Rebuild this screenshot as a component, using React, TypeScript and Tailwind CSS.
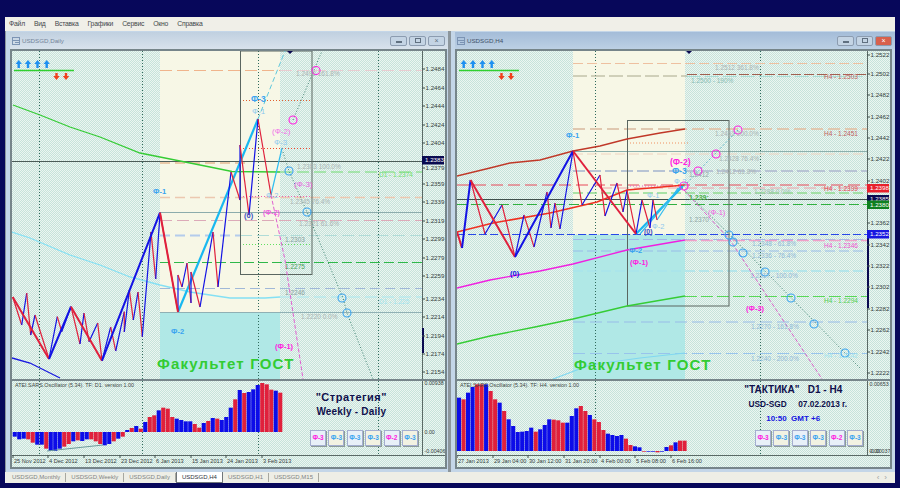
import React from 'react';

type P = [number, number];
type HLine = [number, number, number, string, number, string?];
type Label = [number, number, string, string, number?, boolean?];
type Curve = [P[], string, number, string?];

const RED = '#e0203c';
const BLUE = '#1212e4';
const SKY = '#3aa4f0';
const PALE = '#8ec8ee';
const MAG = '#ff20e0';
const GRN = '#35cc35';
const GRY = '#aab4b4';

const pts = (p: P[]) => p.map((q) => q.join(',')).join(' ');

// segments going up are blue, going down red
const Zigzag = ({ points, width }: { points: P[]; width: number }) => (
  <>
    {points.slice(1).map((p, i) => (
      <line
        key={i}
        x1={points[i][0]}
        y1={points[i][1]}
        x2={p[0]}
        y2={p[1]}
        stroke={p[1] < points[i][1] ? BLUE : RED}
        strokeWidth={width}
      />
    ))}
  </>
);

const daily = {
  title: 'USDSGD,Daily',
  active: false,
  x0: 12,
  bands: [
    [160, 51, 120, 261, '#f7f7e6'],
    [160, 312, 120, 67, '#b0e8e6'],
  ] as [number, number, number, number, string][],
  box: [240.5, 51, 71.5, 223.5],
  vlines: [39.5, 142.5, 258.5, 378.5],
  hlines: [
    [160, 280, 70.5, '#f0b48c', 1, '12 5'],
    [280, 422, 70.5, '#e8ccd0', 1, '12 5'],
    [12, 422, 161.5, '#4c5c58', 1],
    [160, 245, 163, '#eac9a8', 2, '10 5'],
    [160, 422, 197.5, '#ecc8b0', 1.4, '10 5'],
    [160, 422, 212.5, '#8cacac', 1],
    [160, 422, 220.5, '#dcaab8', 1, '12 5'],
    [160, 240, 235.5, '#b4ccec', 2, '10 5'],
    [240, 422, 235.5, '#b0dcd8', 1, '12 5'],
    [160, 422, 262.5, '#2fb84a', 1, '10 4'],
    [160, 422, 288.5, '#a0b8d8', 1, '10 5'],
    [160, 422, 312.5, '#90b0b4', 1],
    [240, 312, 100.5, '#e06030', 1, '1 2'],
    [240, 312, 148.5, '#f04830', 1, '1 2'],
    [240, 312, 196.5, '#f060b0', 1, '1 2'],
    [240, 310, 244.5, '#60e060', 1, '1 2'],
    [280, 422, 172, '#70dc70', 1, '12 5'],
    [280, 422, 297, '#a8e8f0', 1, '12 5'],
  ] as HLine[],
  curves: [
    [[[13, 105], [40, 115], [70, 127], [100, 137], [140, 153], [175, 160], [210, 167], [232, 171.5], [280, 172]], GRN, 1.3],
    [[[12, 232], [30, 238], [70, 255], [100, 265], [130, 277], [160, 285], [190, 292], [230, 298], [265, 298], [280, 297]], '#84e0f4', 1.3],
    [[[12, 358], [30, 363], [60, 378]], '#1818e0', 1.3],
    [[[258, 119], [285, 51]], '#60c8dc', 1, '5 3'],
    [[[293, 120], [322, 51]], '#3c8070', 1, '1 2'],
    [[[283, 152], [289, 171], [307, 212], [343, 298], [347, 313], [373, 379]], '#3c8070', 1, '1 2'],
    [[[271, 195], [285, 260], [303, 379]], '#e060d0', 1, '4 2'],
    [[[178, 312], [258, 119]], '#18b8f0', 2.2],
    [[[271, 195], [282, 148]], '#30bcf0', 1.2],
  ] as Curve[],
  thick: [[12.7, 297], [49, 359], [71, 306.7], [102, 360.7], [160, 212.7], [178, 312]] as P[],
  thin: [
    [12.7, 297], [21.7, 325], [26.7, 293], [30.7, 335], [35, 315], [49, 359], [57.3, 316.7], [61.7, 331.7], [71, 306.7],
    [80, 344], [84, 313], [89, 341.7], [97.7, 323], [102, 360.7], [110.7, 327], [115.7, 351], [124.3, 311.7], [124.3, 332],
    [129.3, 290], [133.3, 320], [138, 292], [142.3, 336.7], [151, 232], [155.7, 279], [160, 212.7], [178, 312], [178, 275],
    [182, 287], [187, 263], [191, 303], [191, 272], [200, 307], [213, 232], [218, 287], [231, 172], [240, 200], [240, 145],
    [249, 215], [258, 119], [271, 195],
  ] as P[],
  rings: [[316, 70.5, MAG], [293, 120, MAG], [289, 171, SKY], [307, 212, SKY], [342, 298, SKY], [347, 313, SKY]] as [number, number, string][],
  labels: [
    [153, 194, 'Ф-1', SKY, 7.5, true],
    [171, 334, 'Ф-2', SKY, 7.5, true],
    [251, 102, 'Ф-3', SKY, 8.5, true],
    [252, 114, 'Ф-1', PALE, 8],
    [272, 134, '(Ф-2)', '#f070e8', 8],
    [274, 145, 'Ф-3', PALE, 8],
    [294, 187, '(Ф-3)', '#e860e0', 8],
    [266, 198, 'Ф-2', PALE, 7.5],
    [244, 218, '(0)', '#3c50c0', 7.5, true],
    [263, 215, '(Ф-2)', '#f060e0', 7, true],
    [275, 349, '(Ф-1)', MAG, 7.5, true],
    [296, 76, '1.2492  161.8%', GRY, 6.5],
    [297, 169, '1.2383  100.0%', GRY, 6.5],
    [290, 204, '1.2345  76.4%', GRY, 6.5],
    [299, 226, '1.2321  61.6%', GRY, 6.5],
    [285, 242, '1.2303', '#88a0a0', 6.5],
    [285, 269, '1.2275', '#48a058', 6.5],
    [285, 295, '1.2246', '#88a0a0', 6.5],
    [301, 319, '1.2220  0.0%', GRY, 6.5],
    [379, 177, 'D1 - 1.2374', '#70e070', 6.5],
    [379, 304, 'D1 - 1.225', '#a0e4f0', 6.5],
  ] as Label[],
  brand: [157, 369] as P,
  marker: 290,
  bar: [328, 353] as P,
  ticks: [[69, '1.2484'], [88, '1.2464'], [106, '1.2444'], [125, '1.2424'], [143, '1.2404'], [168, '1.2379'], [184, '1.2359'], [202, '1.2339'], [221, '1.2319'], [239, '1.2299'], [258, '1.2279'], [276, '1.2259'], [299, '1.2234'], [317, '1.2214'], [336, '1.2194'], [354, '1.2174'], [372, '1.2154']] as [number, string][],
  boxes: [[160, '1.2383', '#0a0a50']] as [number, string, string][],
  osc: {
    title: 'ATEI.SARS.Oscillator (5.34). TF: D1. version 1.00',
    zero: 432,
    top: '0.00938',
    topY: 383,
    mid: [432, '0.00'] as [number, string],
    low: [451, '-0.00406'] as [number, string],
    // bar heights read off a 3x crop
    values: [-14, -22, -20, -22, -32, -38, -38, -50, -57, -57, -50, -44, -36, -28, -25, -27, -22, -22, -28, -36, -40, -36, -28, -20, -14, 6, 12, 18, 10, 30, 45, 50, 65, 73, 70, 45, 40, 36, 32, 32, 24, 13, 27, 33, 42, 40, 36, 45, 73, 98, 126, 117, 120, 128, 141, 147, 143, 127, 124, 118],
    colors: 'bbbrrbbrbbbrrbrbbrrrbbrbrbrbrbrrbrrrbbbbrrbrbrbbbrbrbbbrrrbr',
    step: 4.5,
    start: 12.7,
  },
  axis: [[13, '25 Nov 2012'], [48, '4 Dec 2012'], [84, '13 Dec 2012'], [120, '23 Dec 2012'], [155, '6 Jan 2013'], [191, '15 Jan 2013'], [226, '24 Jan 2013'], [262, '3 Feb 2013']] as [number, string][],
};

const h4 = {
  title: 'USDSGD,H4',
  active: true,
  x0: 457,
  bands: [
    [573, 51, 112, 183, '#f7f7e6'],
    [573, 235, 112, 144, '#b0e8e6'],
  ] as [number, number, number, number, string][],
  box: [627.5, 120.5, 101.5, 185.5],
  vlines: [595.5, 760.5],
  hlines: [
    [573, 867, 63.5, '#eec0a0', 1, '10 4'],
    [573, 687, 76, '#a8a88c', 1, '14 4'],
    [687, 867, 74.5, '#a06050', 1, '10 3'],
    [687, 867, 76.5, '#a8dcd4', 1, '14 4'],
    [573, 867, 129, '#e0c8b0', 2, '12 5'],
    [627, 690, 143, '#f09060', 1, '1 2'],
    [573, 867, 151.5, '#8cb0ac', 1],
    [573, 867, 154, '#f0d4c0', 1, '10 4'],
    [573, 867, 171, '#b8c4d4', 2, '12 4'],
    [457, 867, 185, '#e84858', 1, '12 5'],
    [627, 690, 186, '#e060d0', 1, '1 2'],
    [600, 867, 188, '#f0a0a8', 1, '12 5'],
    [573, 867, 193, '#90dc90', 1.4, '10 4'],
    [457, 867, 199.5, '#40504c', 1],
    [457, 867, 204.5, '#30b040', 1, '10 4'],
    [457, 867, 234.5, '#2848e8', 1, '8 3'],
    [573, 867, 239.5, '#a0b8e8', 1, '10 4'],
    [685, 867, 240.5, '#f0a0c8', 1.4, '12 4'],
    [573, 867, 251, '#98bce8', 1, '10 4'],
    [573, 867, 271, '#a8e4ec', 1.4, '10 4'],
    [685, 867, 296.5, '#58d858', 1, '12 4'],
    [573, 867, 322, '#98bce8', 1, '12 5'],
    [573, 867, 353.5, '#98c4ec', 1, '12 5'],
  ] as HLine[],
  curves: [
    [[[457, 176], [490, 168], [510, 163], [540, 160], [573, 151], [600, 146], [627, 139], [660, 133], [685, 129]], '#c03828', 1.3],
    [[[457, 232], [493, 223], [550, 213], [597, 202], [627, 190], [685, 185]], '#f03020', 1.5],
    [[[457, 288], [490, 280], [540, 271], [573, 264], [627, 250], [685, 240]], '#f020e0', 1.3],
    [[[457, 344], [490, 336], [535, 327], [573, 319], [627, 306], [685, 296]], GRN, 1.3],
    [[[553, 379], [590, 365], [640, 358], [685, 353]], '#80d8f0', 1.2],
    [[[684, 186], [738, 130]], '#58b4c8', 1, '2 2'],
    [[[680, 186], [730, 235], [845, 353], [860, 368]], '#3c8070', 1, '1 2'],
    [[[684, 190], [730, 240], [822, 379]], '#d860c8', 1, '4 2'],
    [[[636, 234], [683, 186]], '#18b8f0', 2.2],
    [[[657, 220], [678, 188]], '#30bcf0', 1.2],
    [[[640, 234], [681, 186]], '#30bcf0', 1.2],
  ] as Curve[],
  thick: [[457, 232], [462, 248], [470.5, 180], [515, 257], [573, 151], [636, 234]] as P[],
  thin: [
    [470.5, 180], [485, 234], [502, 205], [515, 257], [524, 215], [534, 247], [547, 192], [551, 228], [555, 203], [560, 229],
    [573, 151], [582, 205], [600, 175], [605, 216], [617, 183], [623, 212], [627, 190], [636, 234], [642, 200], [650, 228],
    [653, 200], [657, 220],
  ] as P[],
  rings: [[738, 130, MAG], [716, 154, MAG], [698, 171, MAG], [684, 186, MAG], [729, 235, SKY], [733, 242, SKY], [743, 253, SKY], [765, 272, SKY], [791, 298, SKY], [814, 324, SKY], [845, 353, SKY]] as [number, number, string][],
  labels: [
    [566, 138, 'Ф-1', SKY, 7.5, true],
    [629, 253, 'Ф-2', SKY, 7.5, true],
    [630, 265, '(Ф-1)', MAG, 7.5, true],
    [510, 276, '(0)', BLUE, 7.5, true],
    [644, 234, '(0)', '#3c50c0', 7, true],
    [652, 229, 'Ф-2', PALE, 7.5],
    [670, 165, '(Ф-2)', MAG, 8.5, true],
    [672, 174, 'Ф-3', SKY, 8.5, true],
    [674, 184, 'Ф-2', PALE, 7.5],
    [647, 198, 'Ф-1', PALE, 7.5],
    [689, 200, '1.239:', '#48b048', 7, true],
    [708, 215, '(Ф-1)', '#f060e0', 7.5],
    [746, 311, '(Ф-3)', MAG, 7.5, true],
    [715, 70, '1.2512  361.8%', GRY, 6.5],
    [691, 83, '1.2500 - 190%', '#88bcb4', 6.5],
    [715, 136, '1.2451  200.0%', GRY, 6.5],
    [719, 161, '1.2428  76.4%', GRY, 6.5],
    [716, 174, '1.2412  61.8%', GRY, 6.5],
    [689, 177, '1.2412', '#90a8a8', 6.5],
    [754, 194, '1.2388  0.0%', '#a0c0b0', 6.5],
    [689, 222, '1.2370', '#90a8a8', 6.5],
    [752, 246, '1.2348 - 61.8%', '#90b8d8', 6.5],
    [752, 258, '1.2336 - 76.4%', '#90b8d8', 6.5],
    [750, 278, '1.2317 - 100.0%', '#90b8d8', 6.5],
    [751, 329, '1.2270 - 161.8%', '#90b8d8', 6.5],
    [751, 361, '1.2240 - 200.0%', '#90b8d8', 6.5],
    [824, 79, 'H4 - 1.2503', '#c06060', 6.5],
    [824, 136, 'H4 - 1.2451', '#c06060', 6.5],
    [824, 191, 'H4 - 1.2399', '#e04050', 6.5],
    [824, 248, 'H4 - 1.2346', '#f050d0', 6.5],
    [824, 303, 'H4 - 1.2294', '#50d050', 6.5],
    [824, 358, 'H4 - 1.2242', '#a0e4f0', 6.5],
  ] as Label[],
  brand: [574, 370] as P,
  marker: 689,
  bar: [234, 308] as P,
  ticks: [[55, '1.2522'], [74, '1.2502'], [95, '1.2482'], [117, '1.2462'], [138, '1.2442'], [159, '1.2422'], [181, '1.2402'], [223, '1.2362'], [245, '1.2342'], [266, '1.2322'], [287, '1.2302'], [309, '1.2282'], [330, '1.2262'], [352, '1.2242'], [373, '1.2222']] as [number, string][],
  boxes: [[188, '1.2398', '#e8202c'], [199, '1.2385', '#0a0a50'], [204.5, '1.2380', '#108020'], [234, '1.2352', '#1818e0']] as [number, string, string][],
  osc: {
    title: 'ATEI.SARS.Oscillator (5.34). TF: H4. version 1.00',
    zero: 451,
    top: '0.00653',
    topY: 384,
    mid: [451, '0.00'] as [number, string],
    low: [451, '-0.00037'] as [number, string],
    values: [160, 155, 175, 192, 200, 200, 200, 180, 155, 145, 120, 95, 75, 57, 58, 60, 70, 58, 65, 78, 95, 94, 92, 85, 85, 105, 128, 135, 120, 108, 95, 87, 63, 52, 48, 45, 48, 37, 18, 14, 11, -2, -2, -2, -4, -2, 12, 17, 26, 31, 31],
    colors: 'brbbrrbrrbrbbbbbbrbbbrrrbbbrrbrrrbbbbrrbbrbbrbbrbrr',
    step: 4.51,
    start: 457,
  },
  axis: [[457, '27 Jan 2013'], [493, '29 Jan 04:00'], [528, '30 Jan 12:00'], [564, '31 Jan 20:00'], [600, '4 Feb 00:00'], [635, '5 Feb 08:00'], [671, '6 Feb 16:00']] as [number, string][],
};

type Data = typeof daily;

const Plot = ({ d }: { d: Data }) => (
  <svg viewBox={`${d.x0} 51 410 328`} className="h-[328px] w-[410px] shrink-0 overflow-hidden">
    {d.bands.map(([x, y, w, h, fill], i) => (
      <rect key={i} x={x} y={y} width={w} height={h} fill={fill} />
    ))}
    {d.vlines.map((x) => (
      <line key={x} x1={x} x2={x} y1={51} y2={379} stroke="#2f6a5c" strokeDasharray="1 2" />
    ))}
    {d.hlines.map(([x1, x2, y, c, w, dash], i) => (
      <line key={i} x1={x1} x2={x2} y1={y} y2={y} stroke={c} strokeWidth={w} strokeDasharray={dash} />
    ))}
    <rect x={d.box[0]} y={d.box[1]} width={d.box[2]} height={d.box[3]} fill="none" stroke="#5a6660" />
    {d.curves.map(([p, c, w, dash], i) => (
      <polyline key={i} points={pts(p)} fill="none" stroke={c} strokeWidth={w} strokeDasharray={dash} />
    ))}
    <Zigzag points={d.thin} width={1.2} />
    <Zigzag points={d.thick} width={2} />
    {d.rings.map(([x, y, c], i) => (
      <circle key={i} cx={x} cy={y} r={4} fill="none" stroke={c} strokeWidth={1.1} />
    ))}
    {d.labels.map(([x, y, text, c, size, bold], i) => (
      <text key={i} x={x} y={y} fill={c} fontSize={size ?? 7} fontWeight={bold ? 700 : 400}>
        {text}
      </text>
    ))}
    <text x={d.brand[0]} y={d.brand[1]} fill="#33cc33" fontSize={15} fontWeight={700} letterSpacing={1.2}>
      Факультет ГОСТ
    </text>
    <polygon points={`${d.marker - 3},51 ${d.marker + 3},51 ${d.marker},54`} fill="#0a0a50" />
    <g transform={`translate(${d.x0} 0)`}>
      {[6.7, 16, 25.5, 34.7].map((x) => (
        <polygon key={x} fill="#1e90f0" points={`${x},60 ${x + 3.2},64 ${x + 1.2},64 ${x + 1.2},68 ${x - 1.2},68 ${x - 1.2},64 ${x - 3.2},64`} />
      ))}
      <line x1={2} x2={62} y1={70.5} y2={70.5} stroke="#30d030" strokeWidth={1.4} />
      {[44.5, 54].map((x) => (
        <polygon key={x} fill="#f0401c" points={`${x},80 ${x + 3.2},76 ${x + 1.2},76 ${x + 1.2},73 ${x - 1.2},73 ${x - 1.2},76 ${x - 3.2},76`} />
      ))}
    </g>
  </svg>
);

const PriceAxis = ({ d }: { d: Data }) => (
  <svg viewBox="0 51 23 328" className="h-[328px] w-[23px] shrink-0">
    <line x1={0.5} x2={0.5} y1={51} y2={379} stroke="#5a6a66" />
    <line x1={0} x2={0} y1={d.bar[0]} y2={d.bar[1]} stroke="#0a0a50" strokeWidth={4} />
    {d.ticks.map(([y, t]) => (
      <g key={t}>
        <line x1={0} x2={3} y1={y} y2={y} stroke="#40504c" />
        <text x={3.5} y={y + 2.3} fontSize={6.2} fill="#34403c">
          {t}
        </text>
      </g>
    ))}
    {d.boxes.map(([y, t, bg]) => (
      <g key={t}>
        <rect x={0} y={y - 4} width={22} height={8.5} fill={bg} />
        <text x={3} y={y + 2.4} fontSize={6.2} fill="#ffffff">
          {t}
        </text>
      </g>
    ))}
  </svg>
);

const OscBars = ({ d }: { d: Data }) => {
  const o = d.osc;
  return (
    <svg viewBox={`${d.x0} 381 410 74`} className="h-[74px] w-[410px] shrink-0">
      {d.vlines.map((x) => (
        <line key={x} x1={x} x2={x} y1={381} y2={455} stroke="#2f6a5c" strokeDasharray="1 2" />
      ))}
      {o.values.map((v, i) => {
        const h = Math.abs(v) / 3;
        return (
          <rect
            key={i}
            x={o.start + i * o.step}
            y={v > 0 ? o.zero - h : o.zero}
            width={o.step - 0.4}
            height={h}
            fill={o.colors[i] === 'b' ? '#0c0ce8' : '#e0203c'}
          />
        );
      })}
      {d.x0 === 12 && <line x1={47} y1={451} x2={103} y2={445} stroke="#6c9c9c" />}
      <text x={d.x0 + 3} y={387} fontSize={5.4} fill="#3c4844">
        {o.title}
      </text>
    </svg>
  );
};

const OscAxis = ({ d }: { d: Data }) => {
  const o = d.osc;
  return (
    <svg viewBox="0 381 23 74" className="h-[74px] w-[23px] shrink-0">
      <line x1={0.5} x2={0.5} y1={381} y2={455} stroke="#5a6a66" />
      <text x={2.5} y={o.topY + 2} fontSize={5.3} fill="#34403c">{o.top}</text>
      <text x={2.5} y={o.mid[0] + 2} fontSize={5.3} fill="#34403c">{o.mid[1]}</text>
      <text x={2.5} y={o.low[0] + 2} fontSize={5.3} fill="#34403c">{o.low[1]}</text>
    </svg>
  );
};

const TimeAxis = ({ d }: { d: Data }) => (
  <svg viewBox={`${d.x0} 455 433 12`} className="h-[12px] w-[433px] shrink-0">
    <line x1={d.x0} x2={d.x0 + 433} y1={455.5} y2={455.5} stroke="#5a6a66" />
    {d.axis.map(([x, t]) => (
      <g key={t}>
        <line x1={x} x2={x} y1={455} y2={458} stroke="#40504c" />
        <text x={x + 1} y={463} fontSize={5.6} fill="#34403c">
          {t}
        </text>
      </g>
    ))}
  </svg>
);

const SignalButtons = () => (
  <div className="flex gap-[2.4px]">
    {['Ф-3', 'Ф-3', 'Ф-3', 'Ф-3', 'Ф-2', 'Ф-3'].map((t, i) => (
      <button
        key={i}
        className={`flex h-4 w-4 items-center justify-center border border-[#a4aed0] text-[6.5px] font-bold shadow-[1px_1px_0_#8c9c98] ${
          i % 2 ? 'bg-[#f2f2e2]' : 'bg-[#e8f0f8]'
        } ${i === 0 || i === 4 ? 'text-[#ff20e0]' : 'text-[#3aa4f0]'}`}
      >
        {t}
      </button>
    ))}
  </div>
);

const WindowButtons = ({ active }: { active: boolean }) => (
  <div className="flex gap-[2px]">
    {['min', 'max', 'close'].map((b) => (
      <div
        key={b}
        className={`flex h-[10px] w-[17px] items-center justify-center rounded-[2px] border border-[#8c9cb0] ${
          b === 'close' && active ? 'bg-[#d8604c]' : 'bg-[#c4d4e4]'
        }`}
      >
        {b === 'min' && <div className="mt-[3px] h-[2px] w-[6px] border border-[#607080]" />}
        {b === 'max' && <div className="h-[5px] w-[6px] border border-[#607080]" />}
        {b === 'close' && <span className={`text-[7px] leading-none ${active ? 'text-white' : 'text-[#607080]'}`}>×</span>}
      </div>
    ))}
  </div>
);

const ChartWindow = ({ d, className, children }: { d: Data; className: string; children: React.ReactNode }) => (
  <div className={`flex shrink-0 flex-col bg-[#c4d6e8] pl-1 pt-px ${className}`}>
    <div
      className={`flex h-[17px] shrink-0 items-center pr-[3px] ${
        d.active ? 'bg-gradient-to-b from-[#a4bcd8] to-[#bcd0e4]' : 'bg-gradient-to-b from-[#c0d0e0] to-[#d8e2ec]'
      }`}
    >
      <svg viewBox="0 0 8 8" className="ml-[2px] mr-[2px] h-2 w-2 shrink-0" fill="none" stroke="#7c94b4">
        <rect x="0.5" y="0.5" width="7" height="7" />
        <path d="M0.5 3.5h7M3 5.5h4" />
      </svg>
      <span className={`flex-1 text-[6.2px] ${d.active ? 'text-[#405068]' : 'text-[#748498]'}`}>{d.title}</span>
      <WindowButtons active={d.active} />
    </div>
    <div className="flex w-[437px] flex-col border-2 border-[#76858a] bg-[repeating-conic-gradient(#ecf5f1_0_25%,#c6e3da_0_50%)] bg-[length:2px_2px]">
      <div className="flex">
        <Plot d={d} />
        <PriceAxis d={d} />
      </div>
      <div className="h-[2px] bg-[#76858a]" />
      <div className="relative flex">
        <OscBars d={d} />
        <OscAxis d={d} />
        {/* overlay text and signal buttons */}
        <div className="absolute right-[27px] top-0 flex h-[74px] flex-col items-end justify-end pb-[9px]">{children}</div>
      </div>
      <TimeAxis d={d} />
    </div>
  </div>
);

const tabs = ['USDSGD,Monthly', 'USDSGD,Weekly', 'USDSGD,Daily', 'USDSGD,H4', 'USDSGD,H1', 'USDSGD,M15'];

export default function App() {
  return (
    <div className="flex h-[488px] w-[900px] flex-col overflow-hidden bg-[#07075a] px-[5px] pb-[5px] pt-[17px] [font-family:'Liberation_Sans',sans-serif]">
      <div className="flex h-[14px] shrink-0 items-center gap-[9px] bg-[#f0efe8] pl-1 text-[6.8px] tracking-[-0.2px] text-[#44484c]">
        {['Файл', 'Вид', 'Вставка', 'Графики', 'Сервис', 'Окно', 'Справка'].map((m) => (
          <span key={m}>{m}</span>
        ))}
      </div>
      <div className="flex h-[441px] shrink-0 gap-[3px] bg-[#8c969c] pl-px">
        <ChartWindow d={daily} className="w-[442px]">
          <div className="mb-[10px] mr-[31px] flex flex-col items-center text-[#10104c]">
            <span className="text-[11px] font-bold leading-[14px] tracking-[0.5px]">"Стратегия"</span>
            <span className="text-[10px] font-bold leading-[16px] tracking-[0.2px]">Weekly - Daily</span>
          </div>
          <SignalButtons />
        </ChartWindow>
        <ChartWindow d={h4} className="w-[444px]">
          <div className="mb-[4px] mr-[16px] flex flex-col items-center text-[#10104c]">
            <span className="whitespace-pre text-[10px] font-bold leading-[15px]">{'"ТАКТИКА"   D1 - H4'}</span>
            <span className="whitespace-pre pl-[9px] text-[8.3px] font-bold leading-[15px]">{'USD-SGD     07.02.2013 г.'}</span>
            <span className="whitespace-pre text-[8px] font-bold leading-[14px] text-[#1414e0]">{'10:50  GMT +6'}</span>
          </div>
          <SignalButtons />
        </ChartWindow>
      </div>
      <div className="flex h-[11px] shrink-0 items-center bg-[#eeeee6] pl-[2px] text-[6px] text-[#808484]">
        {tabs.map((t) =>
          t === 'USDSGD,H4' ? (
            <span key={t} className="flex h-full items-center border-x border-b border-[#70767a] bg-white px-[5px] text-[#30343c]">
              {t}
            </span>
          ) : (
            <span key={t} className="flex h-[9px] items-center border-r border-[#a8a8a0] px-[5px]">
              {t}
            </span>
          ),
        )}
        <span className="ml-auto pr-[3px] text-[8px] tracking-[5px] text-[#a0a4a4]">‹›</span>
      </div>
    </div>
  );
}
